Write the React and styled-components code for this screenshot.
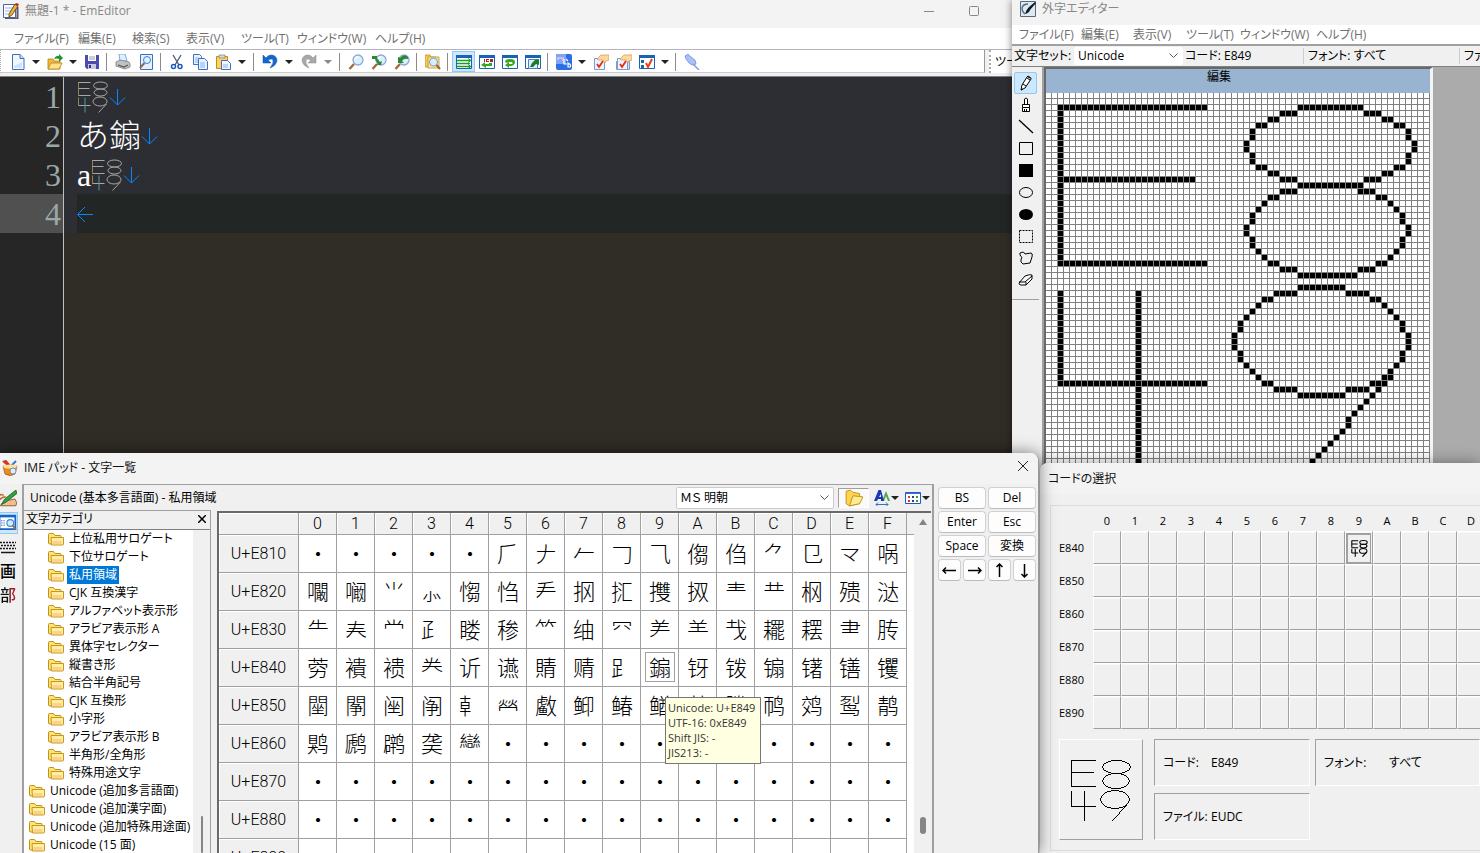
import React from "react"
import styled, { createGlobalStyle, css } from "styled-components"

const GlobalStyle = createGlobalStyle`
  * {
    box-sizing: border-box;
  }
  body {
    margin: 0;
    overflow: hidden;
    font-family: "Open Sans", "Noto Sans CJK JP", sans-serif;
    font-size: 12px;
    line-height: 16px;
    font-feature-settings: "palt";
    color: #000;
  }
  button, select {
    font: inherit;
    font-feature-settings: inherit;
    color: inherit;
    border: 0;
    padding: 0;
    margin: 0;
    background: none;
  }
`

/* ---------- user defined character E849 ---------- */

// [row, first column, length] on a 64 x 64 bitmap
const RUNS = [
  [2, 2, 25], [14, 2, 23], [28, 2, 25], [48, 2, 25],
  [2, 42, 11], [3, 39, 3], [3, 53, 3], [4, 37, 2], [4, 56, 2],
  [5, 35, 2], [5, 58, 2], [6, 34, 1], [6, 60, 1], [7, 34, 1], [7, 60, 1],
  [8, 33, 1], [8, 61, 1], [9, 33, 1], [9, 61, 1], [10, 34, 1], [10, 60, 1],
  [11, 34, 1], [11, 60, 1], [12, 35, 2], [12, 58, 2], [13, 37, 2], [13, 56, 2],
  [14, 39, 3], [14, 53, 3], [15, 42, 11],
  [16, 39, 3], [16, 52, 3], [17, 37, 2], [17, 55, 2], [18, 36, 1], [18, 57, 1],
  [19, 35, 1], [19, 58, 1], [20, 34, 1], [20, 59, 1], [21, 34, 1], [21, 59, 1],
  [22, 33, 1], [22, 60, 1], [23, 33, 1], [23, 60, 1], [24, 34, 1], [24, 59, 1],
  [25, 34, 1], [25, 59, 1], [26, 35, 1], [26, 58, 1], [27, 36, 1], [27, 57, 1],
  [28, 37, 2], [28, 55, 2], [29, 39, 3], [29, 52, 3], [30, 42, 10],
  [32, 42, 8], [33, 38, 4], [33, 50, 4], [34, 36, 2], [34, 54, 2],
  [35, 35, 1], [35, 56, 1], [36, 34, 1], [36, 57, 1], [37, 33, 1], [37, 58, 1],
  [38, 32, 1], [38, 59, 1], [39, 32, 1], [39, 59, 1], [40, 31, 1], [40, 60, 1],
  [41, 31, 1], [41, 60, 1], [42, 31, 1], [42, 60, 1], [43, 32, 1], [43, 59, 1],
  [44, 32, 1], [44, 59, 1], [45, 33, 1], [45, 58, 1], [46, 34, 1], [46, 57, 1],
  [47, 35, 1], [47, 56, 2], [48, 36, 2], [48, 54, 3], [49, 38, 4], [49, 50, 4],
  [49, 55, 1], [50, 42, 8], [50, 54, 1], [51, 53, 1], [52, 52, 1], [53, 51, 1],
  [54, 50, 1], [55, 50, 1], [56, 49, 1], [57, 48, 1], [58, 47, 1], [59, 46, 1],
  [60, 45, 1], [61, 44, 1], [62, 43, 1],
]
const BITMAP =
  RUNS.map(([r, c, n]) => `M${c} ${r}h${n}v1h-${n}z`).join("") +
  "M2 2h1v27h-1zM2 33h1v16h-1zM15 33h1v30h-1z"

const Bitmap = ({ size, grid }) => (
  <svg width={size} height={size} viewBox="0 0 64 64" shapeRendering="crispEdges">
    <path d={BITMAP} />
    {grid && (
      <>
        <defs>
          <pattern id="cells" width="6" height="6" patternUnits="userSpaceOnUse">
            <path d="M5 0h1v6h-1zM0 5h5v1h-5z" fill="#808080" />
          </pattern>
        </defs>
        <g transform={`scale(${64 / size})`}>
          <rect width={size} height={size} fill="url(#cells)" />
        </g>
      </>
    )}
  </svg>
)

const Outline = ({ size, width = 2, color = "#000", accent = color, accent2 = color }) => (
  <svg width={size} height={size} viewBox="0 0 64 64" fill="none" stroke={color} strokeWidth={width}>
    <path d="M3 2v27M3 33v16" stroke={accent} />
    <path d="M3 3h24M3 15h22M3 29h24M3 49h24" />
    <path d="M16 33v30" stroke={accent2} />
    <ellipse cx="47" cy="9" rx="14" ry="7" />
    <ellipse cx="47" cy="23" rx="13" ry="7" />
    <ellipse cx="46" cy="41" rx="14" ry="9" />
    <path d="M59 46L43 63" />
  </svg>
)

/* ---------- icons ---------- */

const Svg = ({ size = 16, children, ...rest }) => (
  <svg width={size} height={size} viewBox="0 0 16 16" fill="none" aria-hidden="true" {...rest}>
    {children}
  </svg>
)

const lens = (
  <>
    <path d="M6 10L1.500 15" stroke="#a56a3c" strokeWidth="2.400" />
    <circle cx="10" cy="6" r="5" fill="#d9f0ff" stroke="#8aa8d8" strokeWidth="1.300" />
    <path d="M7 5q1-2 3-2" stroke="#fff" strokeWidth="1.400" />
  </>
)

const frame = (
  <>
    <path d="M.5 1.500h15v13H.5z" fill="#fff" stroke="#1763b8" />
    <path d="M0 1h16v3H0z" fill="#1763b8" />
  </>
)

const hand = (
  <>
    <path d="M1.500 4.500h10v11h-10z" fill="#eef4ff" stroke="#7a9ad0" />
    <path d="M4 10l2 3 4-6" stroke="#e02c10" strokeWidth="1.800" />
    <path d="M4 5l4-4h8v5l-3 1-1 2-2-3H5z" fill="#ffd8a0" stroke="#d09048" strokeWidth=".7" />
  </>
)

const icons = {
  newFile: (
    <>
      <path d="M2.500.5H10l4 4v11H2.500z" fill="#f3f8ff" stroke="#3f6fc0" />
      <path d="M10 .5v4h4" fill="#c6dcff" stroke="#3f6fc0" />
      <path d="M4 12l8-4v6H4z" fill="#cfe1ff" />
    </>
  ),
  open: (
    <>
      <path d="M1 5h5l1 2h6v8H1z" fill="#f0b93a" stroke="#b98114" strokeWidth=".8" />
      <path d="M1 15l3-6h11l-3 6z" fill="#ffe28a" stroke="#b98114" strokeWidth=".8" />
      <path d="M7 5q2-4 5-3V0l4 4-4 4V5q-2-1-5 0z" fill="#23932d" />
    </>
  ),
  save: (
    <>
      <path d="M1 1h14v14H3l-2-2z" fill="#4a4ab0" />
      <path d="M4 1h8v6H4z" fill="#fff" />
      <path d="M5 3h6M5 5h6" stroke="#9a9ab8" />
      <path d="M4 10h8v5H4z" fill="#c8c8de" />
      <path d="M5 11h2v3H5z" fill="#35357f" />
    </>
  ),
  print: (
    <>
      <path d="M4 0h6l2 7H5z" fill="#dff0ff" stroke="#5f9bdc" strokeWidth=".8" />
      <path d="M1 8l4-2 9 2 1 2v3l-5 2-9-3z" fill="#c2c2c2" stroke="#7c7c7c" strokeWidth=".8" />
      <path d="M3 11l6 2 4-2" stroke="#555" strokeWidth="1.200" />
    </>
  ),
  preview: (
    <>
      <path d="M2.500.5H14.500v15H2.500z" fill="#e6f0ff" stroke="#3f6fc0" />
      <circle cx="9" cy="6" r="3.500" fill="#d8f4ff" stroke="#4380cc" />
      <path d="M6.500 9L2 14" stroke="#8a6a4c" strokeWidth="2" />
    </>
  ),
  cut: (
    <>
      <path d="M4 1l6 10M12 1L6 11" stroke="#4a5878" strokeWidth="1.300" />
      <circle cx="4.500" cy="12.500" r="2" stroke="#1d59b8" strokeWidth="1.500" />
      <circle cx="11" cy="12.500" r="2" stroke="#1d59b8" strokeWidth="1.500" />
    </>
  ),
  copy: (
    <>
      <path d="M1.500.5h6l2 2v8h-8z" fill="#eaf2ff" stroke="#3f6fc0" />
      <path d="M6.500 4.500h6l3 3v8h-9z" fill="#eaf2ff" stroke="#3f6fc0" />
      <path d="M8 9h5M8 11h5M8 13h5M3 4h4M3 6h3M3 8h3" stroke="#8cb0ea" />
    </>
  ),
  paste: (
    <>
      <path d="M1.500 2.500h11v12h-11z" fill="#ffd25c" stroke="#c38a14" />
      <path d="M4 1h6v3H4z" fill="#d8d8d8" stroke="#8a8a8a" strokeWidth=".8" />
      <path d="M6.500 6.500h6l3 3v6h-9z" fill="#f0f6ff" stroke="#3f6fc0" />
      <path d="M8 11h5M8 13h5" stroke="#8cb0ea" />
    </>
  ),
  undo: (
    <path d="M1 1v8h8L6 6q4-2 5 0 1 3-3 8 7-3 7-8-1-5-6-5Q6 1 4 4z" fill="#1268d0" stroke="#0b4ea8" strokeWidth=".5" />
  ),
  redo: (
    <path d="M15 1v8H7l3-3Q6 4 5 6q-1 3 3 8-7-3-7-8 1-5 6-5 3 0 5 3z" fill="#a8a8a8" stroke="#888" strokeWidth=".5" />
  ),
  find: lens,
  findNext: (
    <>
      {lens}
      <path d="M1 2h5v2l3 4 2-1-1 4H5l2-1-3-5H1z" fill="#2a8a32" />
    </>
  ),
  findPrev: (
    <>
      {lens}
      <path d="M14 3q-4-4-8 1L4 3v6h6L8 7q2-3 6-2z" fill="#2a8a32" />
    </>
  ),
  findFiles: (
    <>
      <path d="M0 1h5l1 2h5v10H0z" fill="#f4ca58" stroke="#c0921c" strokeWidth=".8" />
      <path d="M3 3h11v11H3z" fill="#ffe596" stroke="#c0921c" strokeWidth=".8" />
      <circle cx="8.500" cy="8" r="4" fill="#d6f0ff" stroke="#7c98c8" />
      <path d="M11.500 11L15 15" stroke="#96653e" strokeWidth="2" />
    </>
  ),
  wrapNone: (
    <>
      {frame}
      <path d="M1 6.500h13M1 9.500h13M1 12.500h13" stroke="#1d9c28" strokeWidth="1.400" />
      <path d="M12 4.500l3 2-3 2M12 10.500l3 2-3 2" stroke="#1d9c28" />
    </>
  ),
  wrapChars: (
    <>
      {frame}
      <path d="M5 5h1v3H5zM7 5h3v1H8v1h2v1H7zM11 5h3v3h-3z" fill="#b42028" />
      <path d="M13 9v3H7v2l-5-3 4-3v2h4V9z" fill="#35a81c" />
    </>
  ),
  wrapWindow: (
    <>
      {frame}
      <path d="M3 8q0-3 5-3t5 3-4 4H7v2l-4-3 4-3v2h3q2-2-2-2-3 0-3 1z" fill="#35a81c" />
    </>
  ),
  wrapPage: (
    <>
      {frame}
      <path d="M3.500 5.500h9v9h-9z" fill="#e0ecff" stroke="#4b80c8" />
      <path d="M5 13l2-4 3-3 4-1v6l-3-1-3 3z" fill="#16801e" />
    </>
  ),
  config: (
    <>
      <rect width="16" height="16" rx="2" fill="#2c6ee8" />
      <path d="M0 0h10v10H0z" fill="#79a8ff" />
      <path d="M2 6V4h5v3" stroke="#ffb8e0" strokeWidth="1.500" />
      <path d="M8 5v5h3M10 5l2 2M12 9v4h2q2-2-2-4z" stroke="#fff" strokeWidth="1.200" />
    </>
  ),
  props: hand,
  propsAll: (
    <>
      <path d="M.5 7.500h13v8H.5z" fill="#cfe0ff" stroke="#7a9ad0" />
      {hand}
    </>
  ),
  custom: (
    <>
      {frame}
      <path d="M2 6h3v3H2zM2 11h3v3H2z" fill="#1763b8" />
      <path d="M7 9l2 4 4-8" stroke="#e8401c" strokeWidth="2" />
    </>
  ),
  pin: (
    <>
      <path d="M1 2l3-2 3 3 4 3 1 4-4 1-3-2-3-4z" fill="#a8c0f4" stroke="#6f90dc" strokeWidth=".8" />
      <path d="M9 10l6 6" stroke="#7f9de2" strokeWidth="1.500" />
    </>
  ),
  app: (
    <>
      <path d="M.5 1.500h12v13H.5z" fill="#fff" stroke="#4f64a0" />
      <path d="M2 5h8M2 8h7M2 11h6" stroke="#9cb0e0" />
      <path d="M14.500 4v11.500H2" stroke="#585878" strokeWidth="2" />
      <path d="M12 1l3 2-6 9-3 2v-3z" fill="#f0b030" stroke="#503818" strokeWidth=".8" />
      <path d="M12 2l1-2 3 1-1 2z" fill="#c02828" />
    </>
  ),
  eudc: (
    <>
      <path d="M.5.5h15v15H.5z" fill="#dce8f2" stroke="#5c6874" />
      <path d="M8 3q-5 0-6 4 0 4 3 6" stroke="#4d6c88" strokeWidth="1.300" />
      <path d="M15 1L9 6q-3 3-4 7 4-1 5-4l6-7z" fill="#101820" />
    </>
  ),
  imePad: (
    <>
      <path d="M1 6h14l-2 8q-5 3-10 0z" fill="#e88c1c" stroke="#a0500c" strokeWidth=".7" />
      <path d="M1 1l6 5M3 0l5 6" stroke="#d03818" strokeWidth="2" />
      <path d="M14 1L8 7" stroke="#3878d0" strokeWidth="2" />
      <ellipse cx="8" cy="6.500" rx="7" ry="2" fill="#ffe0a0" />
      <circle cx="11" cy="11" r="3" fill="#d8f0ff" stroke="#8090a8" />
    </>
  ),
  folder: (
    <>
      <path d="M.5 3.500q0-1 1-1h4l1.500 2H12q1 0 1 1V13H2q-1.500 0-1.500-1z" fill="#ffe375" stroke="#c0921c" />
      <path d="M3 6.500h12.500V13q0 1-1 1H3.500z" fill="#fff0a0" stroke="#c8961c" />
      <path d="M4.500 10h9v3h-9z" fill="#ffd08c" />
    </>
  ),
  openFolder: (
    <>
      <path d="M1 2l4-1 2 2 6 1v9l-9 2-3-2z" fill="#ffd450" stroke="#c08c10" strokeWidth=".8" />
      <path d="M4 15l3-9 9 1-3 6z" fill="#ffeb94" stroke="#c08c10" strokeWidth=".8" />
    </>
  ),
  fontSize: (
    <>
      <path d="M8 11l4-10 4 10h-2l-2-5-2 5z" fill="#4ca850" />
      <path d="M0 11L4.500 0H7l3 11H7V9H4l-1 2zM5 7h2V4z" fill="#2034b8" />
      <path d="M2 14.500h12M4 12.500l-2 2 2 2M12 12.500l2 2-2 2" stroke="#2878c8" />
    </>
  ),
  dots: (
    <>
      <path d="M.5 2.500h15v11H.5z" fill="#fff" stroke="#2858c8" />
      <path d="M1 3.500h14" stroke="#3c70e0" />
      <path d="M3 6h2v2H3zM3 10h2v2H3z" fill="#d03838" />
      <path d="M7 6h2v2H7zM7 10h2v2H7z" fill="#383880" />
      <path d="M11 6h2v2h-2zM11 10h2v2h-2z" fill="#389848" />
    </>
  ),
  handwriting: (
    <>
      <path d="M0 5q3-2 4 0M0 9q3-3 6-3" stroke="#c86838" strokeWidth="1.500" />
      <path d="M1 14q5-6 8-5l5-1q3 3 1 6z" fill="#f0c090" stroke="#885828" strokeWidth=".8" />
      <path d="M15 0L5 8l-3 5 4-2 10-8z" fill="#35a040" stroke="#186020" strokeWidth=".7" />
    </>
  ),
  charList: (
    <>
      <path d="M.5 1.500h14v12H.5z" fill="#fff" stroke="#1763c8" strokeWidth="1.500" />
      <path d="M0 2h15" stroke="#1763c8" strokeWidth="2" />
      <path d="M2 6h4M2 8h4M2 10h4" stroke="#2050a8" strokeDasharray="1 1" />
      <circle cx="10" cy="8" r="3" fill="#c8f0ff" stroke="#4088d0" />
      <path d="M12 10l3 4" stroke="#a06838" strokeWidth="1.500" />
    </>
  ),
  softKeyboard: (
    <>
      <path d="M0 3.500h16M1 6.500h15M0 9.500h16" stroke="#181818" strokeWidth="1.500" strokeDasharray="2 1" />
      <path d="M1 13.500h14" stroke="#181818" strokeWidth="1.500" />
    </>
  ),
}

const toolIcons = [
  ["ペン", <path key="p" d="M3 15l1-5 5-8 1-1 3 2v1l-6 9zM3 15l2-1M9 3l3 2M5 9l3 2M10 2l2 1" fill="#fff" stroke="#000" />],
  ["ブラシ", <path key="b" d="M6.500 7V2q1.500-2 3 0v5M4.500 7.500h7v3h-7zM4.500 10.500v4h7v-4M6.500 12v2M8.500 12v2" fill="#fff" stroke="#000" />],
  ["直線", <path key="l" d="M1 1l14 13" stroke="#000" strokeWidth="1.300" />],
  ["四角形", <path key="r" d="M1.500 1.500h13v12h-13z" stroke="#000" />],
  ["塗りつぶし四角形", <path key="f" d="M1 1h14v13H1z" fill="#000" />],
  ["楕円", <ellipse key="e" cx="8" cy="7.500" rx="6.500" ry="5" stroke="#000" />],
  ["塗りつぶし楕円", <ellipse key="g" cx="8" cy="7.500" rx="7" ry="5.500" fill="#000" />],
  ["矩形選択", <path key="s" d="M1.500 1.500h13v12h-13z" stroke="#000" strokeDasharray="2 1" />],
  ["自由選択", <path key="n" d="M2 2q4-2 5 1l6-1q2 0 1 4l-2 6-7 1q-3-2-2-4 2-3-1-5z" stroke="#000" />],
  ["消しゴム", <path key="x" d="M1 10l6-7q5-2 7-1v4l-6 6H3q-2 0-2-2zM1 9h6l7-6M8 9v3" fill="#fff" stroke="#000" />],
]

const Arrow = ({ left }) => (
  <svg width="17" height="18" viewBox="0 0 17 18" fill="none" stroke="#0a84ff">
    <path d={left ? "M16 9.500H1M8 2L.5 9.500 8 17" : "M8.500 1v16M1 9.500l7.500 7.500 7.500-7.500"} />
  </svg>
)

/* ---------- shared ---------- */

const Desktop = styled.main`
  position: relative;
  height: 100vh;
  overflow: hidden;
  background: #ababab;
`
const Window = styled.section`
  position: absolute;
  display: flex;
  flex-direction: column;
  overflow: hidden;
  background: #f0f0f0;
`
const TitleBar = styled.header`
  display: flex;
  align-items: center;
  flex: none;
  height: ${(p) => p.$height}px;
  padding: ${(p) => p.$pad || "0 8px"};
  gap: 6px;
  background: #f3f3f3;
  color: ${(p) => (p.$active ? "#111" : "#888")};
`
const Title = styled.h1`
  flex: 1;
  margin: 0;
  font-size: 12px;
  font-weight: 400;
  white-space: nowrap;
`
const MenuBar = styled.nav`
  display: flex;
  align-items: center;
  flex: none;
  height: ${(p) => p.$height}px;
  padding-left: ${(p) => p.$left}px;
  background: #fff;
  color: #707070;
`
const MenuItem = styled.button`
  width: ${(p) => p.$width}px;
  text-align: left;
  white-space: nowrap;
`
const Menu = ({ items, height, left }) => (
  <MenuBar $height={height} $left={left}>
    {items.map(([label, width]) => (
      <MenuItem key={label} $width={width}>
        {label}
      </MenuItem>
    ))}
  </MenuBar>
)

const Caret = styled.span`
  border: 4px solid transparent;
  border-top-color: ${(p) => p.$color || "#222"};
  border-bottom: 0;
`

/* ---------- EmEditor ---------- */

const EditorWindow = styled(Window)`
  inset: 0 0 0 0;
`
const WindowControls = styled.div`
  display: flex;
  gap: 35px;
  margin-right: 493px;
`
const Toolbars = styled.div`
  display: flex;
  flex: none;
  height: 28px;
  padding-bottom: 3px;
  border-top: 1px solid #b4b4c0;
  border-bottom: 1px solid #808080;
`
const ToolStrip = styled.div`
  display: flex;
  align-items: center;
  width: 985px;
  padding: 1px 0 0 5px;
  background: #fff;
  border-right: 1px solid #999;
  border-left: 1px dotted #aaa;
  border-bottom: 1px solid #ccc;
`
const ExtraStrip = styled.div`
  flex: 1;
  margin-left: 4px;
  padding: 4px 0 0 4px;
  background: #fff;
  border-left: 2px dotted #aaa;
`
const ToolButton = styled.button`
  display: grid;
  place-items: center;
  width: 23px;
  height: 21px;
  ${(p) =>
    p.$on &&
    css`
      background: #cce8ff;
      border: 1px solid #90c8f6;
    `}
`
const DropButton = styled.button`
  display: grid;
  place-items: center;
  width: ${(p) => (p.$wide ? 16 : 14)}px;
  height: 21px;
`
const Separator = styled.span`
  width: 1px;
  height: 18px;
  margin: 0 4px 0 3px;
  background: #8c8c8c;
`
const Page = styled.div`
  flex: 1;
  display: flex;
  flex-direction: column;
  background: linear-gradient(90deg, #262626 63px, #c0c0c0 63px, #c0c0c0 64px, #302c26 64px);
`
const Line = styled.div`
  display: flex;
  height: 39px;
  flex: none;
`
const LineNumber = styled.span`
  width: 64px;
  padding-right: 2px;
  border-right: 1px solid #c0c0c0;
  background: ${(p) => (p.$current ? "#505050" : "#262626")};
  color: #9aa8aa;
  font: 32px/40px "Liberation Serif", serif;
  text-align: right;
`
const LineText = styled.div`
  flex: 1;
  display: flex;
  align-items: center;
  border-left: 13px solid #2d2e33;
  background: ${(p) => (p.$current ? "#222624" : "#2d2e33")};
  color: #fff;
  font: 300 32px/38px "Liberation Serif", "Noto Sans CJK SC", serif;
  font-feature-settings: normal;
`

const tools = [
  "newFile", ">", "open", ">", "save", "|", "print", "preview", "|", "cut", "copy", "paste", ">>", "|",
  "undo", ">>", "redo", ">>", "|", "find", "findNext", "findPrev", "|", "findFiles", "|",
  "wrapNone", "wrapChars", "wrapWindow", "wrapPage", "|", "config", ">", "props", "propsAll",
  "custom", ">", "|", "pin",
]

const glyph = <Outline size={32} color="#a8a8a0" accent="#8c8458" accent2="#4f9c9c" />

const Editor = () => (
  <EditorWindow>
    <TitleBar $height={28} $pad="0 8px 7px 3px">
      <Svg>{icons.app}</Svg>
      <Title>無題-1 * - EmEditor</Title>
      <WindowControls>
        <svg width="10" height="10" stroke="#888" fill="none">
          <path d="M0 5.500h10" />
        </svg>
        <svg width="10" height="10" stroke="#888" fill="none">
          <rect x=".5" y=".5" width="9" height="9" rx="1" />
        </svg>
      </WindowControls>
    </TitleBar>
    <Menu
      height={21}
      left={14}
      items={[
        ["ファイル(F)", 64], ["編集(E)", 54], ["検索(S)", 54], ["表示(V)", 55],
        ["ツール(T)", 56], ["ウィンドウ(W)", 78], ["ヘルプ(H)", 60],
      ]}
    />
    <Toolbars>
      <ToolStrip>
        {tools.map((name, i) => {
          if (name === "|") return <Separator key={i} />
          if (name[0] === ">")
            return (
              <DropButton key={i} $wide={name === ">>"} aria-label="メニュー">
                <Caret $color={tools[i - 1] === "redo" ? "#888" : "#222"} />
              </DropButton>
            )
          return (
            <ToolButton key={i} $on={name === "wrapNone"} aria-label={name}>
              <Svg>{icons[name]}</Svg>
            </ToolButton>
          )
        })}
      </ToolStrip>
      <ExtraStrip>ツール</ExtraStrip>
    </Toolbars>
    <Page>
      <Line>
        <LineNumber>1</LineNumber>
        <LineText>{glyph}<Arrow /></LineText>
      </Line>
      <Line>
        <LineNumber>2</LineNumber>
        <LineText>あ䥇<Arrow /></LineText>
      </Line>
      <Line>
        <LineNumber>3</LineNumber>
        <LineText>a{glyph}<Arrow /></LineText>
      </Line>
      <Line>
        <LineNumber $current>4</LineNumber>
        <LineText $current><Arrow left /></LineText>
      </Line>
    </Page>
  </EditorWindow>
)

/* ---------- private character editor ---------- */

const EudcWindow = styled(Window)`
  inset: 0 0 0 1012px;
  box-shadow: 0 0 8px rgba(0, 0, 0, 0.5);
`
const InfoBar = styled.div`
  display: flex;
  align-items: center;
  flex: none;
  height: 23px;
  padding-left: 2px;
  border-top: 2px solid #a0a0a0;
  border-bottom: 1px solid #808080;
  white-space: nowrap;
`
const InfoLabel = styled.label`
  flex: none;
  width: 60px;
`
const Info = styled.span`
  flex: none;
  width: ${(p) => p.$width}px;
  padding-left: ${(p) => p.$left || 2}px;
  border-right: 1px solid #ccc;
`
const SelectBox = styled.span`
  position: relative;
  flex: none;
  width: ${(p) => p.$width}px;
  height: ${(p) => p.$height}px;
  background: #fff;
  border: 1px solid ${(p) => (p.$line ? "#ccc" : "#fff")};
  border-radius: 2px;
  select {
    width: 100%;
    height: 100%;
    padding-left: 3px;
    appearance: none;
    background: transparent;
  }
  svg {
    position: absolute;
    right: 4px;
    top: calc(50% - 3px);
    pointer-events: none;
  }
`
const Chevron = () => (
  <svg width="9" height="6" fill="none" stroke="#555">
    <path d="M.5.500l4 4 4-4" />
  </svg>
)
const EudcBody = styled.div`
  display: flex;
  flex: 1;
  min-height: 0;
  background: #ababab;
`
const ToolBox = styled.div`
  display: flex;
  flex-direction: column;
  align-items: center;
  flex: none;
  width: 32px;
  padding: 5px 3px 0 0;
  background: #f0f0f0;
  border-right: 2px solid #a0a0a0;
`
const PaintButton = styled.button`
  display: grid;
  place-items: center;
  width: 23px;
  height: 22px;
  border-radius: 2px;
  ${(p) =>
    p.$on &&
    css`
      background: #cce8ff;
      border: 1px solid #90c8f6;
    `}
`
const ToolRule = styled.hr`
  width: 27px;
  margin: 7px 0 0;
  border: 0;
  border-top: 1px solid #a0a0a0;
`
const CanvasWindow = styled.div`
  flex: none;
  border: 2px solid #696969;
  border-right: 3px solid #f4f4f4;
  background: #fff;
  svg {
    display: block;
  }
`
const CanvasTitle = styled.div`
  height: 24px;
  padding-right: 38px;
  background: #99b4d1;
  text-align: center;
`

const Eudc = () => (
  <EudcWindow>
    <TitleBar $height={25} $pad="0 8px 8px">
      <Svg>{icons.eudc}</Svg>
      <Title>外字エディター</Title>
    </TitleBar>
    <Menu
      height={19}
      left={7}
      items={[
        ["ファイル(F)", 62], ["編集(E)", 52], ["表示(V)", 53],
        ["ツール(T)", 54], ["ウィンドウ(W)", 76], ["ヘルプ(H)", 60],
      ]}
    />
    <InfoBar>
      <InfoLabel htmlFor="charset">文字セット:</InfoLabel>
      <SelectBox $width={109} $height={18}>
        <select id="charset" defaultValue="Unicode">
          <option>Unicode</option>
        </select>
        <Chevron />
      </SelectBox>
      <Info $width={121}>コード: E849</Info>
      <Info $width={156} $left={4}>フォント: すべて</Info>
      <Info $width={156} $left={4}>ファイル: EUDC</Info>
    </InfoBar>
    <EudcBody>
      <ToolBox>
        {toolIcons.map(([name, shape], i) => (
          <PaintButton key={name} $on={i === 0} aria-label={name}>
            <Svg>{shape}</Svg>
          </PaintButton>
        ))}
        <ToolRule />
      </ToolBox>
      <CanvasWindow>
        <CanvasTitle>編集</CanvasTitle>
        <Bitmap size={384} grid />
      </CanvasWindow>
    </EudcBody>
  </EudcWindow>
)

/* ---------- code selection dialog ---------- */

const CodeWindow = styled(Window)`
  inset: 463px 0 0 1040px;
  border-top-left-radius: 8px;
  box-shadow: 0 0 16px rgba(0, 0, 0, 0.4);
`
const GroupBox = styled.div`
  flex: 1;
  margin: 11px 0 2px 10px;
  padding: 4px 0 0 8px;
  border: 1px solid #dcdcdc;
  border-right: 0;
`
const CodeTable = styled.table`
  table-layout: fixed;
  width: 482px;
  border-collapse: separate;
  border-spacing: 0;
  font-size: 11px;
  th {
    padding: 0;
    font-weight: 400;
    text-align: center;
  }
  thead th {
    height: 21px;
  }
  th:first-child {
    width: 34px;
    text-align: left;
  }
  td {
    height: 33px;
    padding: 0;
    border: 1px solid;
    border-color: #fff #a0a0a0 #a0a0a0 #fff;
    box-shadow: inset 0 1px #f8f8f8;
  }
`
const Picked = styled.div`
  display: grid;
  place-items: center;
  width: 25px;
  height: 30px;
  border: 2px solid #a0a0a0;
  border-right-width: 1px;
  border-bottom-width: 1px;
`
const Details = styled.div`
  display: grid;
  grid-template-columns: 90px 156px 1fr;
  grid-template-rows: 47px 47px;
  column-gap: 5px;
  row-gap: 7px;
  margin-top: 10px;
`
const Preview = styled.div`
  display: grid;
  place-items: center;
  grid-row: span 2;
  margin-right: 6px;
  border: 1px solid;
  border-color: #fff #a0a0a0 #a0a0a0 #fff;
`
const Field = styled.div`
  display: flex;
  align-items: center;
  gap: 8px;
  padding-left: 8px;
  border: 1px solid;
  border-color: #a0a0a0 #fff #fff #a0a0a0;
  white-space: nowrap;
  span:first-child {
    width: ${(p) => p.$label || 40}px;
  }
`

const HEX = "0123456789ABCDEF".split("")

const CodePicker = () => (
  <CodeWindow>
    <TitleBar $height={31} $active>
      <Title>コードの選択</Title>
    </TitleBar>
    <GroupBox>
      <CodeTable>
        <thead>
          <tr>
            <th />
            {HEX.map((h) => (
              <th key={h}>{h}</th>
            ))}
          </tr>
        </thead>
        <tbody>
          {["E840", "E850", "E860", "E870", "E880", "E890"].map((code) => (
            <tr key={code}>
              <th scope="row">{code}</th>
              {HEX.map((h) => (
                <td key={h}>
                  {code === "E840" && h === "9" && (
                    <Picked>
                      <Outline size={17} width={4} />
                    </Picked>
                  )}
                </td>
              ))}
            </tr>
          ))}
        </tbody>
      </CodeTable>
      <Details>
        <Preview>
          <Bitmap size={64} />
        </Preview>
        <Field>
          <span>コード:</span>
          <span>E849</span>
        </Field>
        <Field $label={57}>
          <span>フォント:</span>
          <span>すべて</span>
        </Field>
        <Field>
          <span>ファイル:</span>
          <span>EUDC</span>
        </Field>
      </Details>
    </GroupBox>
  </CodeWindow>
)

/* ---------- IME pad ---------- */

const PadWindow = styled(Window)`
  inset: 453px auto 0 0;
  width: 1039px;
  border-top-right-radius: 8px;
  border-right: 1px solid #999;
  box-shadow: 0 0 16px rgba(0, 0, 0, 0.5);
`
const PadBody = styled.div`
  display: flex;
  flex: 1;
  min-height: 0;
`
const Rail = styled.div`
  display: flex;
  flex-direction: column;
  flex: none;
  gap: 2px;
  width: 22px;
  padding-top: 4px;
`
const RailButton = styled.button`
  display: grid;
  place-items: center;
  width: 20px;
  height: 22px;
  margin-left: -2px;
  font-size: 16px;
  font-weight: 500;
  ${(p) =>
    p.$on &&
    css`
      background: #cce8ff;
      border: 1px solid #90c8f6;
    `}
`
const TwoTone = styled.span`
  background: linear-gradient(90deg, #111 60%, #a01c28 60%);
  background-clip: text;
  color: transparent;
`
const PadMain = styled.div`
  flex: 1;
  display: flex;
  flex-direction: column;
  min-width: 0;
  border: 2px solid #a0a0a0;
  border-top-width: 1px;
  border-bottom: 0;
`
const PadHeader = styled.div`
  display: flex;
  align-items: center;
  flex: none;
  height: 25px;
  padding: 0 1px 0 6px;
  gap: 4px;
`
const Path = styled.span`
  flex: 1;
`
const PadButton = styled.button`
  display: flex;
  align-items: center;
  justify-content: center;
  width: ${(p) => p.$width}px;
  height: 20px;
  gap: 1px;
  ${(p) =>
    p.$on &&
    css`
      background: #fafafa;
      border: 1px solid;
      border-color: #a0a0a0 #fff #fff #a0a0a0;
    `}
`
const PadColumns = styled.div`
  display: flex;
  flex: 1;
  min-height: 0;
`
const TreePane = styled.div`
  display: flex;
  flex-direction: column;
  flex: none;
  width: 187px;
  border: 1px solid #a0a0a0;
  border-left: 0;
  border-bottom: 0;
`
const TreeTitle = styled.div`
  display: flex;
  justify-content: space-between;
  align-items: center;
  flex: none;
  height: 18px;
  padding: 0 4px 2px 2px;
`
const TreeBox = styled.div`
  display: flex;
  flex: 1;
  min-height: 0;
  overflow: hidden;
  border-top: 1px solid #808080;
  background: #fff;
`
const TreeList = styled.ul`
  flex: 1;
  min-width: 0;
  margin: 0;
  padding: 0;
  list-style: none;
`
const TreeItem = styled.li`
  display: flex;
  align-items: center;
  gap: 3px;
  height: 18px;
  padding-left: ${(p) => (p.$child ? 24 : 5)}px;
  white-space: nowrap;
  span {
    padding: 0 2px;
    line-height: 18px;
    ${(p) =>
      p.$selected &&
      css`
        background: #0078d7;
        color: #fff;
      `}
  }
`
const ScrollTrack = styled.div`
  display: flex;
  flex-direction: column;
  align-items: center;
  flex: none;
  width: ${(p) => p.$width}px;
  padding-top: ${(p) => p.$top}px;
  background: #f0f0f0;
`
const Thumb = styled.span`
  width: ${(p) => p.$width}px;
  height: ${(p) => p.$height}px;
  margin-top: ${(p) => p.$top || 0}px;
  border-radius: 3px;
  background: #858585;
`
const UpArrow = styled.span`
  border: 4px solid transparent;
  border-bottom: 6px solid #858585;
  border-top: 0;
`
const GridPane = styled.div`
  display: flex;
  flex: 1;
  min-width: 0;
  margin: 1px 1px 0 6px;
  overflow: hidden;
  border: 2px solid #696969;
  border-right: 0;
  border-bottom: 0;
  background: #fff;
`
const GridSheet = styled.div`
  flex: 1;
  min-width: 0;
  background: linear-gradient(#f0f0f0 21px, #a0a0a0 21px, #a0a0a0 22px, #fff 22px);
`
const CharTable = styled.table`
  table-layout: fixed;
  width: 688px;
  border-collapse: separate;
  border-spacing: 0;
  th,
  td {
    height: 38px;
    padding: 0;
    border: 0 solid #a0a0a0;
    border-width: 0 1px 1px 0;
    text-align: center;
  }
  th {
    background: #f0f0f0;
    box-shadow: inset 1px 1px #fff;
    font: 300 16px/20px Roboto, sans-serif;
  }
  thead th {
    height: 22px;
  }
  thead th:first-child {
    width: 80px;
  }
  td {
    padding: 0 0 3px 1px;
    font: 300 22px/30px "Noto Sans CJK SC", "Noto Sans CJK JP", sans-serif;
    font-feature-settings: normal;
  }
`
const Chosen = styled.span`
  display: block;
  width: 30px;
  height: 30px;
  margin: 2px auto 0;
  border: 1px solid #a0a0a0;
  line-height: 26px;
`
const Keys = styled.div`
  display: grid;
  grid-template-columns: repeat(4, 23px);
  grid-auto-rows: 22px;
  align-content: start;
  column-gap: 2px;
  row-gap: 2px;
  flex: none;
  width: 104px;
  padding: 3px 0 0 4px;
`
const Key = styled.button`
  display: grid;
  place-items: center;
  grid-column: span ${(p) => p.$span};
  background: #fdfdfd;
  border: 1px solid #d0d0d0;
  border-bottom-color: #bbb;
  border-radius: 4px;
`
const Tip = styled.div`
  position: absolute;
  left: 665px;
  top: 244px;
  width: 96px;
  padding: 2px 2px 3px;
  border: 1px solid #767676;
  background: #ffffe1;
  color: #333;
  font-size: 11px;
  line-height: 15px;
  white-space: nowrap;
`

const children = [
  "上位私用サロゲート", "下位サロゲート", "私用領域", "CJK 互換漢字", "アルファベット表示形",
  "アラビア表示形 A", "異体字セレクター", "縦書き形", "結合半角記号", "CJK 互換形",
  "小字形", "アラビア表示形 B", "半角形/全角形", "特殊用途文字",
]
const planes = ["Unicode (追加多言語面)", "Unicode (追加漢字面)", "Unicode (追加特殊用途面)", "Unicode (15 面)"]

const DOT = "・"
// code points drawn from U+E815 on; everything else is an empty slot
const CHARS = [
  0x2e81, 0x20087, 0x20089, 0x200cc, 0x2e84, 0x3473, 0x3447, 0x2e88, 0x2e8b, 0x9fb4, 0x359e,
  0x361a, 0x360e, 0x2e8c, 0x2e97, 0x396e, 0x3918, 0x9fb5, 0x39cf, 0x39df, 0x3a73, 0x39d0,
  0x9fb6, 0x9fb7, 0x3b4e, 0x3c6e, 0x3ce0,
  0x2ea7, 0x215d7, 0x9fb8, 0x2eaa, 0x4056, 0x415f, 0x2eae, 0x4337, 0x2eb3, 0x2eb6, 0x2eb7,
  0x2298f, 0x43b1, 0x43ac, 0x2ebb, 0x43dd,
  0x44d6, 0x4661, 0x464c, 0x9fb9, 0x4723, 0x4729, 0x477c, 0x478d, 0x2eca, 0x4947, 0x497a,
  0x497d, 0x4982, 0x4983, 0x4985, 0x4986,
  0x499f, 0x499b, 0x49b7, 0x49b6, 0x9fba, 0x241fe, 0x4ca3, 0x4c9f, 0x4ca0, 0x4ca1, 0x4c77,
  0x4ca2, 0x4d13, 0x4d14, 0x4d15, 0x4d16,
  0x4d17, 0x4d18, 0x4d19, 0x4dae, 0x9fbb,
]
const rows = [0xe810, 0xe820, 0xe830, 0xe840, 0xe850, 0xe860, 0xe870, 0xe880, 0xe890]
const charAt = (code) => {
  const c = CHARS[code - 0xe815]
  return c ? String.fromCodePoint(c) : DOT
}

const keyArrows = {
  左: "M14 7.500H1M4 4.500l-3 3 3 3",
  右: "M1 7.500h13M11 4.500l3 3-3 3",
  上: "M7.500 14V1M4.500 4l3-3 3 3",
  下: "M7.500 1v13M4.500 11l3 3 3-3",
}

const ImePad = () => (
  <PadWindow>
    <TitleBar $height={31} $active $pad="0 9px 2px 2px">
      <Svg>{icons.imePad}</Svg>
      <Title>IME パッド - 文字一覧</Title>
      <button aria-label="閉じる">
        <svg width="12" height="12" stroke="#222">
          <path d="M1 1l10 10M11 1L1 11" />
        </svg>
      </button>
    </TitleBar>
    <PadBody>
      <Rail>
        <RailButton aria-label="手書き"><Svg size={18}>{icons.handwriting}</Svg></RailButton>
        <RailButton $on aria-label="文字一覧"><Svg size={18}>{icons.charList}</Svg></RailButton>
        <RailButton aria-label="ソフトキーボード"><Svg>{icons.softKeyboard}</Svg></RailButton>
        <RailButton>画</RailButton>
        <RailButton><TwoTone>部</TwoTone></RailButton>
      </Rail>
      <PadMain>
        <PadHeader>
          <Path>Unicode (基本多言語面) - 私用領域</Path>
          <SelectBox $width={158} $height={22} $line>
            <select aria-label="フォント" defaultValue="ＭＳ 明朝">
              <option>ＭＳ 明朝</option>
            </select>
            <Chevron />
          </SelectBox>
          <PadButton $on $width={31} aria-label="カテゴリ"><Svg size={18}>{icons.openFolder}</Svg></PadButton>
          <PadButton $width={27} aria-label="文字サイズ"><Svg>{icons.fontSize}</Svg><Caret /></PadButton>
          <PadButton $width={27} aria-label="表示形式"><Svg>{icons.dots}</Svg><Caret /></PadButton>
        </PadHeader>
        <PadColumns>
          <TreePane>
            <TreeTitle>
              文字カテゴリ
              <button aria-label="閉じる">
                <svg width="8" height="8" stroke="#000" strokeWidth="1.500">
                  <path d="M0 0l8 8M8 0L0 8" />
                </svg>
              </button>
            </TreeTitle>
            <TreeBox>
              <TreeList>
                {children.map((name) => (
                  <TreeItem key={name} $child $selected={name === "私用領域"}>
                    <Svg>{icons.folder}</Svg>
                    <span>{name}</span>
                  </TreeItem>
                ))}
                {planes.map((name) => (
                  <TreeItem key={name}>
                    <Svg>{icons.folder}</Svg>
                    <span>{name}</span>
                  </TreeItem>
                ))}
              </TreeList>
              <ScrollTrack $width={17} $top={286}>
                <Thumb $width={2} $height={60} />
              </ScrollTrack>
            </TreeBox>
          </TreePane>
          <GridPane>
            <GridSheet>
              <CharTable>
                <thead>
                  <tr>
                    <th />
                    {HEX.map((h) => (
                      <th key={h}>{h}</th>
                    ))}
                  </tr>
                </thead>
                <tbody>
                  {rows.map((base) => (
                    <tr key={base}>
                      <th scope="row">U+{base.toString(16).toUpperCase()}</th>
                      {HEX.map((h, i) => (
                        <td key={h}>
                          {base + i === 0xe849 ? <Chosen>{charAt(base + i)}</Chosen> : charAt(base + i)}
                        </td>
                      ))}
                    </tr>
                  ))}
                </tbody>
              </CharTable>
            </GridSheet>
            <ScrollTrack $width={17} $top={6}>
              <UpArrow />
              <Thumb $width={6} $height={17} $top={292} />
            </ScrollTrack>
          </GridPane>
        </PadColumns>
      </PadMain>
      <Keys>
        {["BS", "Del", "Enter", "Esc", "Space", "変換"].map((k) => (
          <Key key={k} $span={2}>{k}</Key>
        ))}
        {Object.entries(keyArrows).map(([name, d]) => (
          <Key key={name} $span={1} aria-label={name}>
            <svg width="15" height="15" fill="none" stroke="#000" strokeWidth="1.500">
              <path d={d} />
            </svg>
          </Key>
        ))}
      </Keys>
    </PadBody>
    <Tip role="tooltip">
      Unicode: U+E849
      <br />
      UTF-16: 0xE849
      <br />
      Shift JIS: -
      <br />
      JIS213: -
    </Tip>
  </PadWindow>
)

const App = () => (
  <Desktop>
    <GlobalStyle />
    <Editor />
    <Eudc />
    <CodePicker />
    <ImePad />
  </Desktop>
)

export default App
